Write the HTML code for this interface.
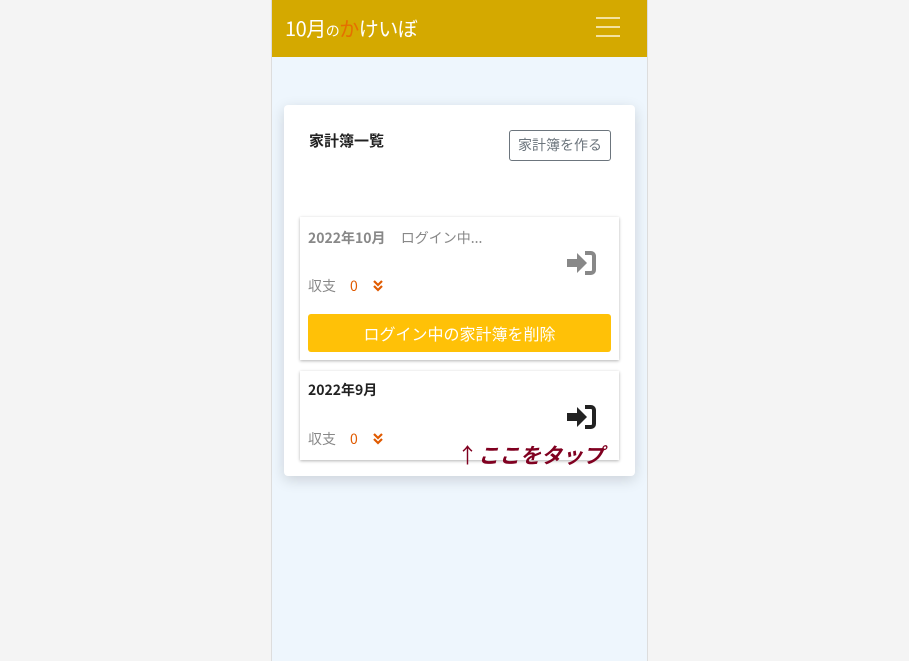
<!DOCTYPE html>
<html><head><meta charset="utf-8"><style>
body{margin:0;background:#f4f4f4;width:909px;height:661px;overflow:hidden;font-family:"Liberation Sans","Noto Sans CJK JP",sans-serif;}
.col{position:absolute;left:271px;top:0;width:375px;height:661px;background:#eef6fd;border-left:1px solid #ddd;border-right:1px solid #ddd;}
.hdr{position:absolute;left:0;top:0;width:375px;height:57px;background:#d4a900;}
.title{position:absolute;left:13px;top:14px;color:#fff;font-size:20px;font-family:"Noto Sans CJK JP",sans-serif;line-height:28px;letter-spacing:-0.5px}
.burger{position:absolute;left:324px;width:24px;height:2px;background:#f3e2a0}
.card{position:absolute;left:12px;top:105px;width:351px;height:371px;background:#fff;border-radius:4px;box-shadow:0 4px 14px rgba(0,0,0,.15)}
.h{position:absolute;left:25px;top:25px;font-size:15px;font-weight:bold;color:#222;font-family:"Noto Sans CJK JP",sans-serif}
.mk{position:absolute;left:225px;top:25px;width:102px;height:31px;border:1px solid #6c757d;border-radius:3px;color:#6c757d;font-size:14px;text-align:center;line-height:29px;box-sizing:border-box;font-family:"Noto Sans CJK JP",sans-serif}
.it{position:absolute;left:16px;width:319px;background:#fff;box-shadow:0 1px 3px rgba(0,0,0,.3)}
.t{position:absolute;left:8px;font-size:14px;font-weight:bold;font-family:"Noto Sans CJK JP",sans-serif}
.s{position:absolute;left:8px;font-size:14px;color:#888;font-family:"Noto Sans CJK JP",sans-serif}
.s b{font-weight:normal;color:#e05a00;margin-left:14px}
.del{position:absolute;left:8px;top:97px;width:303px;height:38px;background:#ffc107;border-radius:3px;color:#fff;font-size:16px;text-align:center;line-height:38px;font-family:"Noto Sans CJK JP",sans-serif}
svg.i{position:absolute;left:266px;width:30px;height:26px}
svg.c{position:absolute;left:73px;width:10px;height:12px}
</style></head><body>
<div class="col">
<div class="hdr"><div class="title">10月<span style="font-size:14px">の</span><span style="color:#e56f00">か</span>けいぼ</div>
<div class="burger" style="top:17px"></div><div class="burger" style="top:26px"></div><div class="burger" style="top:35px"></div></div>
<div class="card">
<div class="h">家計簿一覧</div><div class="mk">家計簿を作る</div>
<div class="it" style="top:112px;height:143px">
<div class="t" style="top:11px;color:#888">2022年10月 <span style="font-weight:normal;margin-left:12px">ログイン中...</span></div>
<svg class="i" style="top:33px" viewBox="0 0 30 26"><path d="M1 9h10V3l10 10-10 10v-6H1z" fill="#888"/><path d="M19 3h6a3 3 0 0 1 3 3v14a3 3 0 0 1-3 3h-6" stroke="#888" stroke-width="4" fill="none"/></svg>
<div class="s" style="top:59px">収支<b>0</b></div>
<svg class="c" style="top:63px" viewBox="0 0 10 12"><path d="M1 1l4 4 4-4M1 6l4 4 4-4" stroke="#e05a00" stroke-width="2.2" fill="none"/></svg>
<div class="del">ログイン中の家計簿を削除</div>
</div>
<div class="it" style="top:266px;height:89px">
<div class="t" style="top:9px;color:#222">2022年9月</div>
<svg class="i" style="top:33px" viewBox="0 0 30 26"><path d="M1 9h10V3l10 10-10 10v-6H1z" fill="#222"/><path d="M19 3h6a3 3 0 0 1 3 3v14a3 3 0 0 1-3 3h-6" stroke="#222" stroke-width="4" fill="none"/></svg>
<div class="s" style="top:58px">収支<b>0</b></div>
<svg class="c" style="top:62px" viewBox="0 0 10 12"><path d="M1 1l4 4 4-4M1 6l4 4 4-4" stroke="#e05a00" stroke-width="2.2" fill="none"/></svg>
</div>
<div style="position:absolute;left:173px;top:336px;color:#800020;font-size:21px;font-weight:bold;font-family:'Noto Sans CJK JP',sans-serif;line-height:28px"><span style="font-weight:normal">↑</span><i>ここをタップ</i></div>
</div>
</div>
</body></html>
